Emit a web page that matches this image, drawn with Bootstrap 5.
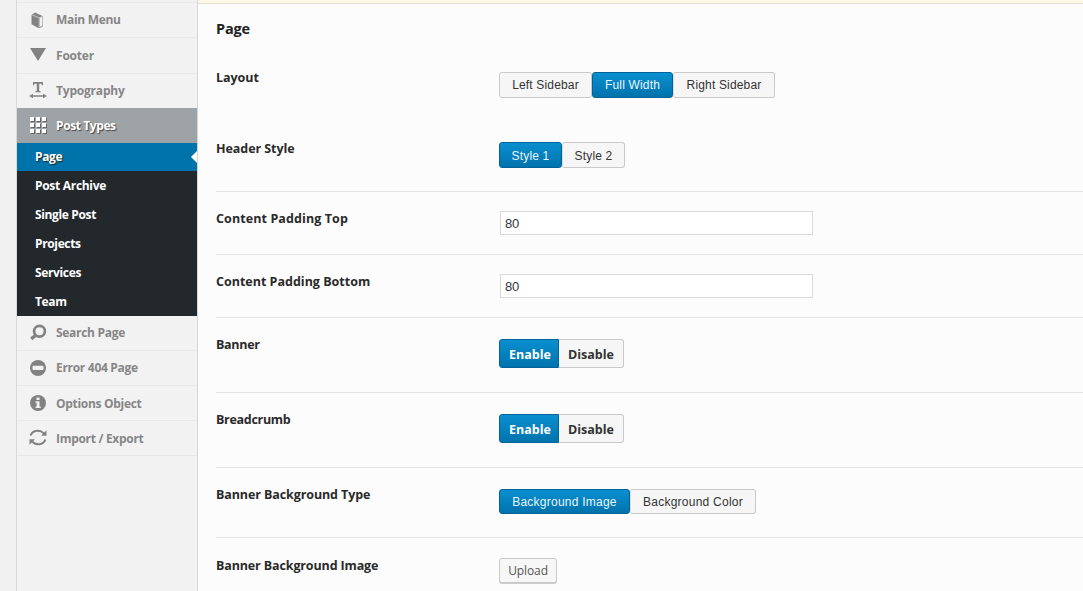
<!DOCTYPE html>
<html lang="en">
<head>
<meta charset="utf-8">
<title>Theme Options</title>
<link href="https://cdn.jsdelivr.net/npm/bootstrap@5.3.0/dist/css/bootstrap.min.css" rel="stylesheet">
<style>
body{background:#f1f1f1;font-family:"Open Sans","Noto Sans",sans-serif;font-size:12.5px;height:591px;overflow:hidden;color:#2a2a2a}
.gutter{width:17px;background:#f0f0f0;border-right:1px solid #d9d9d9}
.side{width:180px;background:#f2f2f2;padding-top:2px}
.side .item{height:35.25px;border-top:1px solid #e9e9e9;padding-left:12px;gap:9px;color:#868686;font-weight:700;font-size:12px;text-decoration:none;letter-spacing:-.3px}
.side .item.wide{letter-spacing:-.2px}
.side .item svg{width:18px;height:18px;flex:none;color:#828282}
.side .item.current{background:#9ea3a8;border-color:#9ea3a8;color:#fff;text-shadow:1px 1px 1px #444;letter-spacing:-.4px}
.side .item.current svg{color:#fff;filter:drop-shadow(1px 1px 0 #666)}
.side .sub~.item{height:35px}
.side .sub+.item{height:34px;border-top:0}
.sub{background:#23282d;height:173px}
.sub a{height:29px;padding-left:18px;color:#fff;font-weight:700;font-size:12px;letter-spacing:-.36px;text-decoration:none}
.sub a.here{height:28px;background:#0073aa;text-shadow:1px 1px 1px #222}
.sub a.here::after{content:"";border:6px solid transparent;border-right-color:#fcfcfc;border-left:0}
.tail{border-top:1px solid #e7e7e7}
.main{background:#fcfcfc;border-left:1px solid #d5d5d5}
.notice{height:4px;background:#fdf8e4;border-bottom:1px solid #e5e2d5}
.fields{padding-left:18px}
.fields h1{height:47px;margin:0;font-size:14.5px;letter-spacing:-.2px;font-weight:700;line-height:49px;color:#222}
.opt{border-bottom:1px solid #e4e4e4;height:63px}
.opt>label{width:283px;font-weight:700;line-height:18px;padding-top:18px;letter-spacing:-.06px}
.opt>label.low{padding-top:19px}
.ctl{padding-top:21px}
.seg{border:1px solid #c9c9c9;background:#f6f6f6;color:#333;border-radius:3px;height:26px;padding:0;font:12px/25px "Liberation Sans",Arial,sans-serif;letter-spacing:.16px;text-align:center}
.seg.on{background:linear-gradient(#0a8fd0,#0073ac);border-color:#00649a;color:#e9f5fc}
.seg+.seg{border-left-color:#ddd}
.seg+.seg.on{border-left-color:#00649a}
.seg.low{padding-top:1px}
.seg.bgt{letter-spacing:.24px;height:25px}
.seg.sw{height:29px;padding-top:1px;font:700 12.5px/28px "Open Sans","Noto Sans",sans-serif;letter-spacing:0}
.seg.sw.on{border-radius:3px 0 0 3px;color:#fff;padding-left:2px}
.seg.sw+.sw{border-radius:0 3px 3px 0;border-left:0}
.val{width:313px;height:24px;margin-left:1px;padding:1px 4px 0;border:1px solid #d9d9d9;border-radius:0;background:#fff;font:13px "Liberation Sans",Arial,sans-serif;letter-spacing:-.2px;color:#32373c}
.seg.up{height:25px;background:#f7f7f7;color:#555;box-shadow:0 1px 0 #ccc;font:12px/24px "Open Sans",sans-serif;letter-spacing:-.1px}
</style>
</head>
<body class="d-flex">
<div class="gutter flex-shrink-0"></div>
<nav class="side flex-shrink-0">
  <a class="item d-flex align-items-center"><svg viewBox="0 0 18 18" fill="currentColor"><path d="M2.500 4l6.800 3.200v9.800l-6.800-3.800z"/><path d="M2.500 4L6 1.500 13.500 5v11L9.300 17V7.200z"/><path d="M10.500 6.800L13 6v9l-2.500 1z" fill="#f2f2f2"/><path d="M3.500 3.700L10 6.800 13.200 5.500" fill="none" stroke="#d5d5d5" stroke-width=".7"/></svg>Main Menu</a>
  <a class="item wide d-flex align-items-center"><svg viewBox="0 0 18 18" fill="currentColor"><path d="M1 2h16L9 15z"/></svg><span style="padding-top:2px">Footer</span></a>
  <a class="item wide d-flex align-items-center"><svg viewBox="0 0 18 18" fill="currentColor"><path d="M4 0h10v3.500h-.8l-.7-1.700h-2.300v7l1.600.6v.8H6.200v-.8l1.600-.6v-7H5.500l-.7 1.700H4zM0 14l4-2.300v1.500h10v-1.500l4 2.300-4 2.300v-1.500H4v1.500z"/></svg><span style="padding-top:1px">Typography</span></a>
  <a class="item current d-flex align-items-center"><svg viewBox="0 0 18 18" fill="currentColor"><path d="M1 0h4v4H1zM7 0h4v4H7zM13 0h4v4h-4zM1 6h4v4H1zM7 6h4v4H7zM13 6h4v4h-4zM1 12h4v4H1zM7 12h4v4H7zM13 12h4v4h-4z"/></svg>Post Types</a>
  <div class="sub d-flex flex-column">
    <a class="here d-flex align-items-center justify-content-between">Page</a>
    <a class="d-flex align-items-center" style="letter-spacing:-.3px">Post Archive</a>
    <a class="d-flex align-items-center">Single Post</a>
    <a class="d-flex align-items-center">Projects</a>
    <a class="d-flex align-items-center">Services</a>
    <a class="d-flex align-items-center">Team</a>
  </div>
  <a class="item d-flex align-items-center"><svg viewBox="0 0 18 18" fill="none" stroke="currentColor"><circle cx="10.500" cy="7.300" r="5.400" stroke-width="2.700"/><path d="M6.500 11.500L2.200 14.800" stroke-width="3.400"/></svg>Search Page</a>
  <a class="item d-flex align-items-center"><svg viewBox="0 0 18 18"><circle cx="9" cy="9" r="8" fill="currentColor"/><rect x="3.500" y="6.800" width="11" height="4.200" rx="1" fill="#f2f2f2"/></svg>Error 404 Page</a>
  <a class="item d-flex align-items-center"><svg viewBox="0 0 18 18"><circle cx="9" cy="9" r="8" fill="currentColor"/><path d="M7.500 3.500h3V6h-3zM6.500 7.200h4v5.300h1.200V14H6.500v-1.500h1.200V8.700H6.500z" fill="#f2f2f2"/></svg><span style="padding-top:1px">Options Object</span></a>
  <a class="item d-flex align-items-center"><svg viewBox="0 0 18 18" fill="none" stroke="currentColor" stroke-width="1.900"><path d="M1.500 6.500C4 .8 11 .3 15 4.500M16.500 10.500c-2.500 5.700-9.500 6.200-13.500 2"/><path d="M17.500 1.200v5.500H12zM.5 15.800v-5.500H6z" fill="currentColor" stroke="none"/></svg><span style="padding-top:1px">Import / Export</span></a>
  <div class="tail"></div>
</nav>
<main class="main flex-grow-1">
  <div class="notice"></div>
  <div class="fields">
    <h1>Page</h1>
    <div class="opt d-flex border-0" style="height:70px"><label>Layout</label><div class="ctl d-flex"><button class="seg" style="width:93px">Left Sidebar</button><button class="seg on" style="width:81px">Full Width</button><button class="seg" style="width:102px">Right Sidebar</button></div></div>
    <div class="opt d-flex" style="height:71px"><label class="low">Header Style</label><div class="ctl d-flex"><button class="seg on low" style="width:63px">Style 1</button><button class="seg low" style="width:63px">Style 2</button></div></div>
    <div class="opt d-flex"><label style="letter-spacing:.1px">Content Padding Top</label><div class="ctl d-flex" style="padding-top:19px"><input class="val" value="80"></div></div>
    <div class="opt d-flex"><label style="letter-spacing:0">Content Padding Bottom</label><div class="ctl d-flex" style="padding-top:19px"><input class="val" value="80"></div></div>
    <div class="opt d-flex" style="height:75px"><label style="letter-spacing:-.3px">Banner</label><div class="ctl d-flex"><button class="seg sw on" style="width:60px">Enable</button><button class="seg sw" style="width:65px">Disable</button></div></div>
    <div class="opt d-flex" style="height:75px"><label style="letter-spacing:-.3px">Breadcrumb</label><div class="ctl d-flex"><button class="seg sw on" style="width:60px">Enable</button><button class="seg sw" style="width:65px">Disable</button></div></div>
    <div class="opt d-flex" style="height:70px"><label style="letter-spacing:-.1px">Banner Background Type</label><div class="ctl d-flex"><button class="seg on bgt" style="width:131px">Background Image</button><button class="seg bgt" style="width:126px">Background Color</button></div></div>
    <div class="opt d-flex border-0"><label class="low" style="letter-spacing:-.13px">Banner Background Image</label><div class="ctl d-flex" style="padding-top:20px"><button class="seg up" style="width:58px">Upload</button></div></div>
  </div>
</main>
<script src="https://cdn.jsdelivr.net/npm/bootstrap@5.3.0/dist/js/bootstrap.bundle.min.js"></script>
</body>
</html>
